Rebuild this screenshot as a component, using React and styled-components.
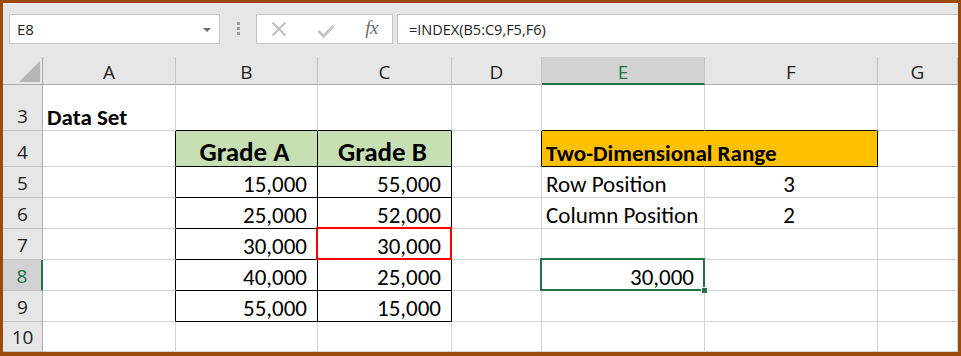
import React from 'react';
import styled, { createGlobalStyle, css } from 'styled-components';

const GlobalStyle = createGlobalStyle`
  html, body { margin: 0; padding: 0; background: #ffffff; }
  #root { width: 961px; height: 356px; }
`;

const GREEN = '#217346';
const GRID = '#d4d4d4';
const CELL_FONT = `"Carlito", "Lato", "Liberation Sans", sans-serif`;
const UI_FONT = `"Open Sans", "Noto Sans", sans-serif`;

const Frame = styled.div`
  box-sizing: border-box;
  width: 961px;
  height: 356px;
  border: 3px solid #9c4a0c;
  border-bottom-width: 4px;
  background: #e6e6e6;
  display: flex;
  flex-direction: column;
  overflow: hidden;
`;

const Toolbar = styled.div`
  box-sizing: border-box;
  height: 54px;
  flex: none;
  display: flex;
  align-items: flex-start;
  padding: 11px 0 0 6px;
  box-shadow: inset 0 1px 0 #efefef;
`;

const Box = styled.div`
  box-sizing: border-box;
  height: 30px;
  background: #ffffff;
  border: 1px solid #c6c6c6;
  display: flex;
  align-items: center;
`;

const NameBox = styled(Box)`
  width: 211px;
  padding: 0 7px 0 7px;
  justify-content: space-between;
  font-family: ${UI_FONT};
  font-size: 15px;
  color: #222;
`;

const Arrow = styled.span`
  width: 0;
  height: 0;
  border-left: 4px solid transparent;
  border-right: 4px solid transparent;
  border-top: 4px solid #6a6a6a;
  margin-right: 1px;
  margin-top: 1px;
`;

const Grip = styled.div`
  width: 3px;
  margin: 8px 16px 0 17px;
  display: flex;
  flex-direction: column;
  gap: 2px;
  & > span { width: 3px; height: 3px; background: #9d9d9d; }
`;

const IconBox = styled(Box)`
  width: 137px;
  padding: 0 14px 0 14px;
  justify-content: space-between;
`;

const Fx = styled.span`
  font-family: "Liberation Serif", serif;
  font-style: italic;
  font-size: 19px;
  color: #6b6b6b;
  letter-spacing: -0.5px;
  margin-bottom: 2px;
`;

const FormulaBox = styled(Box)`
  flex: 1;
  margin-left: 4px;
  border-right: none;
  padding-left: 11px;
  font-family: ${UI_FONT};
  font-size: 14.5px;
  color: #222;
`;

const Sheet = styled.div`
  display: grid;
  grid-template-columns: 40px 133px 142px 134px 90px 163px 173px 1fr;
  grid-template-rows: 28px 46px 36px repeat(5, 31px) 30px;
  flex: 1;
`;

const Corner = styled.div`
  box-sizing: border-box;
  border-right: 1px solid #ababab;
  border-bottom: 1px solid #ababab;
  display: flex;
  align-items: flex-end;
  justify-content: flex-end;
  padding: 0 2px 2px 0;
`;

const ColHeader = styled.div`
  box-sizing: border-box;
  background: ${p => (p.$active ? '#d2d2d2' : '#e6e6e6')};
  border-right: 1px solid #c4c4c4;
  border-bottom: ${p => (p.$active ? `2px solid ${GREEN}` : '1px solid #ababab')};
  display: flex;
  align-items: center;
  justify-content: center;
  padding-top: ${p => (p.$active ? '3px' : '2px')};
  font-family: ${UI_FONT};
  font-size: 19px;
  color: ${p => (p.$active ? GREEN : '#1e1e1e')};
`;

const RowHeader = styled.div`
  box-sizing: border-box;
  background: ${p => (p.$active ? '#d2d2d2' : '#e6e6e6')};
  border-right: ${p => (p.$active ? `2px solid ${GREEN}` : '1px solid #ababab')};
  border-bottom: 1px solid #c4c4c4;
  display: flex;
  align-items: flex-end;
  justify-content: center;
  padding-bottom: 4px;
  font-family: ${UI_FONT};
  font-size: 19px;
  line-height: 19px;
  color: ${p => (p.$active ? GREEN : '#1e1e1e')};
`;

const Cell = styled.div`
  box-sizing: border-box;
  min-width: 0;
  background: ${p => p.$fill || '#ffffff'};
  border-right: 1px solid ${p => p.$right || GRID};
  border-bottom: 1px solid ${p => p.$bottom || GRID};
  display: flex;
  align-items: flex-end;
  justify-content: ${p => (p.$align === 'right' ? 'flex-end' : p.$align === 'center' ? 'center' : 'flex-start')};
  padding: 0 ${p => (p.$align === 'right' ? '10px' : '4px')} 1px ${p => (p.$align === 'left' ? '4px' : '0')};
  white-space: nowrap;
  font-family: ${CELL_FONT};
  font-size: ${p => (p.$big ? '27px' : '23px')};
  line-height: ${p => (p.$big ? '27px' : '23px')};
  font-weight: ${p => (p.$bold ? 700 : 400)};
  color: #000;
  z-index: ${p => (p.$spill ? 1 : 'auto')};
  ${p => p.$mark && css`
    position: relative;
    &::after {
      content: '';
      position: absolute;
      left: -2px; top: -2px; right: -1px; bottom: -1px;
      border: 2px solid ${p.$mark};
      pointer-events: none;
      z-index: 2;
    }
  `}
`;

const Handle = styled.span`
  position: absolute;
  right: -4px;
  bottom: -4px;
  width: 5px;
  height: 5px;
  background: ${GREEN};
  border: 1px solid #ffffff;
  z-index: 3;
`;

const COLS = ['A', 'B', 'C', 'D', 'E', 'F', 'G'];
const ROWS = [3, 4, 5, 6, 7, 8, 9, 10];

const gradeA = ['15,000', '25,000', '30,000', '40,000', '55,000'];
const gradeB = ['55,000', '52,000', '30,000', '25,000', '15,000'];

const content = {
  A3: { text: 'Data Set', bold: true, align: 'left' },
  B4: { text: 'Grade A', bold: true, big: true, align: 'center', fill: '#c6e0b4' },
  C4: { text: 'Grade B', bold: true, big: true, align: 'center', fill: '#c6e0b4' },
  E4: { text: 'Two-Dimensional Range', bold: true, align: 'left', fill: '#ffc000', spill: true },
  F4: { fill: '#ffc000' },
  E5: { text: 'Row Position', align: 'left' },
  F5: { text: '3', align: 'center' },
  E6: { text: 'Column Position', align: 'left' },
  F6: { text: '2', align: 'center' },
  E8: { text: '30,000', align: 'right', mark: GREEN, handle: true },
  C7: { mark: '#ff0000' },
};
gradeA.forEach((v, i) => { content['B' + (5 + i)] = { text: v, align: 'right' }; });
gradeB.forEach((v, i) => {
  const key = 'C' + (5 + i);
  content[key] = { ...(content[key] || {}), text: v, align: 'right' };
});

const inTable = (c, r) => (c === 'B' || c === 'C') && r >= 4 && r <= 9;
const inRange = (c, r) => (c === 'E' || c === 'F') && r === 4;

function edges(c, r) {
  const ci = COLS.indexOf(c);
  const next = COLS[ci + 1];
  let right;
  let bottom;
  if (inTable(c, r) || (next && inTable(next, r))) right = '#000';
  if (inTable(c, r) || inTable(c, r + 1)) bottom = '#000';
  if (c === 'E' && r === 4) right = '#ffc000';
  if (c === 'F' && r === 4) right = '#000';
  if (c === 'D' && r === 4) right = '#000';
  if (inRange(c, r) || inRange(c, r + 1)) bottom = '#000';
  return { right, bottom };
}

export default function App() {
  return (
    <>
      <GlobalStyle />
      <Frame>
        <Toolbar>
          <NameBox>
            <span>E8</span>
            <Arrow />
          </NameBox>
          <Grip><span /><span /><span /></Grip>
          <IconBox>
            <svg width="16" height="16" viewBox="0 0 16 16">
              <path d="M1.5 1.5 L14.5 14.5 M14.5 1.5 L1.5 14.5" stroke="#bdbdbd" strokeWidth="1.8" fill="none" />
            </svg>
            <svg width="18" height="14" viewBox="0 0 18 14" style={{ marginTop: 4 }}>
              <path d="M1.5 7 L6.5 12 L16.5 2" stroke="#c4c4c4" strokeWidth="3" fill="none" />
            </svg>
            <Fx>fx</Fx>
          </IconBox>
          <FormulaBox>=INDEX(B5:C9,F5,F6)</FormulaBox>
        </Toolbar>
        <Sheet>
          <Corner>
            <svg width="21" height="21" viewBox="0 0 21 21">
              <polygon points="21,0 21,21 0,21" fill="#b5b5b5" />
            </svg>
          </Corner>
          {COLS.map(c => (
            <ColHeader key={c} $active={c === 'E'}>{c}</ColHeader>
          ))}
          {ROWS.map(r => (
            <React.Fragment key={r}>
              <RowHeader $active={r === 8}>{r}</RowHeader>
              {COLS.map(c => {
                const d = content[c + r] || {};
                const e = edges(c, r);
                return (
                  <Cell
                    key={c + r}
                    $fill={d.fill}
                    $right={e.right}
                    $bottom={e.bottom}
                    $align={d.align}
                    $bold={d.bold}
                    $big={d.big}
                    $mark={d.mark}
                    $spill={d.spill}
                  >
                    {d.text}
                    {d.handle && <Handle />}
                  </Cell>
                );
              })}
            </React.Fragment>
          ))}
        </Sheet>
      </Frame>
    </>
  );
}
